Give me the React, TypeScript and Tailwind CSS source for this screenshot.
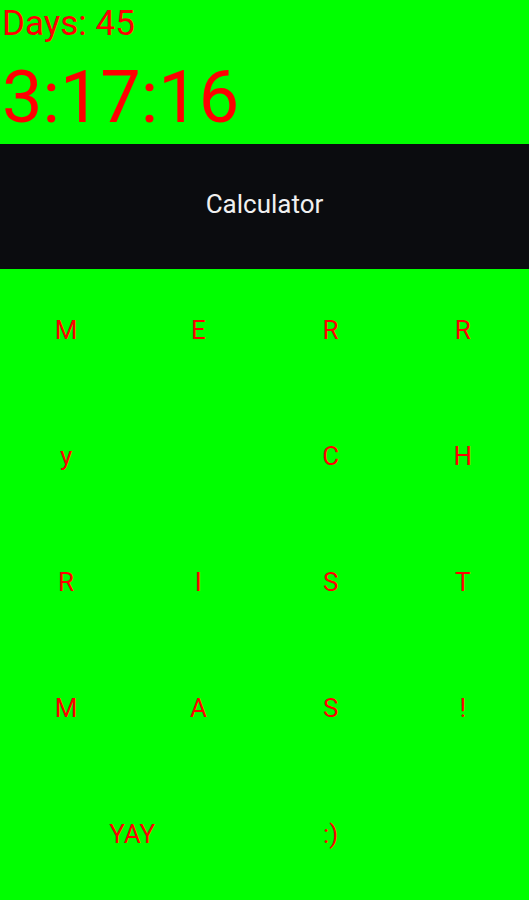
const rows: { label: string; span?: boolean }[][] = [
  [{ label: 'M' }, { label: 'E' }, { label: 'R' }, { label: 'R' }],
  [{ label: 'y' }, { label: '' }, { label: 'C' }, { label: 'H' }],
  [{ label: 'R' }, { label: 'I' }, { label: 'S' }, { label: 'T' }],
  [{ label: 'M' }, { label: 'A' }, { label: 'S' }, { label: '!' }],
  [{ label: 'YAY', span: true }, { label: ':)' }, { label: '' }],
];

export default function App() {
  return (
    <div className="w-[529px] h-[900px] bg-[#00ff00] overflow-hidden font-['Roboto',_'Liberation_Sans',_sans-serif] text-[#ff0000]">
      {/* Countdown */}
      <div className="h-[144px] pl-[2px]">
        <div className="text-[35px] leading-[40px] pt-[4px]">Days: 45</div>
        <div className="text-[72px] leading-[72px] mt-[18px]">3:17:16</div>
      </div>

      {/* Title bar */}
      <div className="h-[125px] bg-[#0b0c0f] flex items-center justify-center pb-[4px]">
        <span className="text-[26px] text-[#f0f0f0]">Calculator</span>
      </div>

      {/* Buttons */}
      <div className="grid grid-cols-4 grid-rows-5 h-[631px]">
        {rows.flatMap((row, r) =>
          row.map((btn, c) => (
            <button
              key={`${r}-${c}`}
              className={`flex items-center justify-center pb-[4px] text-[26px] ${btn.span ? 'col-span-2' : ''}`}
            >
              {btn.label}
            </button>
          ))
        )}
      </div>
    </div>
  );
}
